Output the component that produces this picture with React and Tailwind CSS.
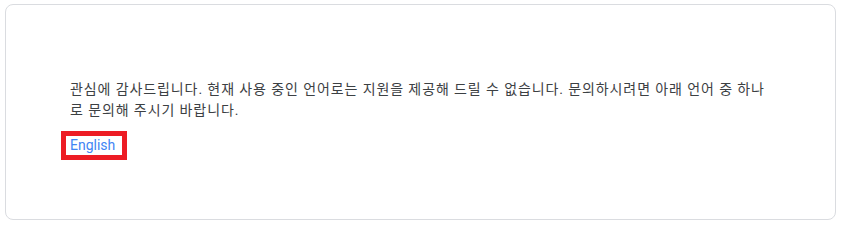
export default function App() {
  return (
    <div className="w-[849px] h-[234px] bg-white pt-[4px] pl-[5px]" style={{ fontFamily: 'Roboto, "Noto Sans CJK KR", sans-serif' }}>
      <div className="w-[831px] h-[216px] border border-[#dadce0] rounded-lg px-[64px] pt-[74px]">
        <p className="text-[14px] leading-[21px] text-[#3c4043] tracking-[0.9px]">
          관심에 감사드립니다. 현재 사용 중인 언어로는 지원을 제공해 드릴 수 없습니다. 문의하시려면 아래 언어 중 하나로 문의해 주시기 바랍니다.
        </p>
        <div className="mt-[10px] ml-[-9px] inline-block border-[5px] border-[#ed1c24]">
          <a className="block pl-[4px] pr-[7px] text-[14px] leading-[19px] text-[#4285f4]">English</a>
        </div>
      </div>
    </div>
  );
}
